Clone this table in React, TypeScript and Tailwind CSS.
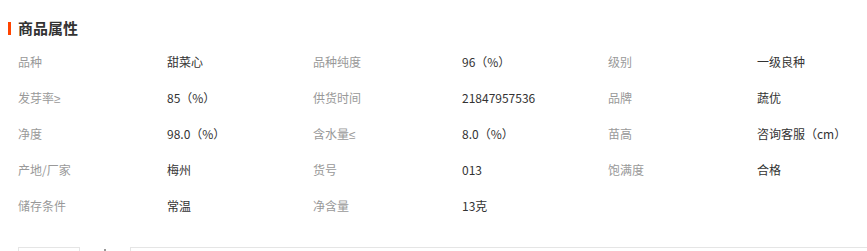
import React from "react";

const rows: [string, string][][] = [
  [["品种", "甜菜心"], ["品种纯度", "96（%）"], ["级别", "一级良种"]],
  [["发芽率≥", "85（%）"], ["供货时间", "21847957536"], ["品牌", "蔬优"]],
  [["净度", "98.0（%）"], ["含水量≤", "8.0（%）"], ["苗高", "咨询客服（cm）"]],
  [["产地/厂家", "梅州"], ["货号", "013"], ["饱满度", "合格"]],
  [["储存条件", "常温"], ["净含量", "13克"]],
];

function Label({ text }: { text: string }) {
  const last = text.slice(-1);
  if (last === "≥" || last === "≤") {
    return (
      <>
        {text.slice(0, -1)}
        <span style={{ fontFamily: '"Liberation Sans", sans-serif' }}>{last}</span>
      </>
    );
  }
  return <>{text}</>;
}

export default function App() {
  return (
    <div
      className="w-[867px] h-[251px] overflow-hidden bg-white"
      style={{ fontFamily: '"Microsoft YaHei", "Noto Sans CJK SC", sans-serif' }}
    >
      <div className="flex items-center pt-[16px] pl-[8px] h-[40px]">
        <div className="w-[3px] h-[13px] bg-[#ff4400]" />
        <div className="ml-[7px] text-[15px] font-bold text-[#333] leading-[18px]">商品属性</div>
      </div>
      <div className="pl-[18px] pt-[4px]">
        {rows.map((row, i) => (
          <div key={i} className="flex h-[36px] items-center text-[12px] leading-[16px]">
            {row.map(([k, v], j) => (
              <div key={j} className="flex w-[295px] shrink-0">
                <div className="w-[149px] text-[#999]">
                  <Label text={k} />
                </div>
                <div className="text-[#333]">{v}</div>
              </div>
            ))}
          </div>
        ))}
      </div>
      <div className="flex items-start mt-[23px] pl-[18px]">
        <div className="w-[62px] h-[10px] border-t border-l border-r border-[#e5e5e5]" />
        <div className="ml-[24px] mt-[2px] w-[2px] h-[2px] bg-[#999]" />
        <div className="ml-[24px] flex-1 h-[10px] border-t border-l border-[#e5e5e5]" />
      </div>
    </div>
  );
}
